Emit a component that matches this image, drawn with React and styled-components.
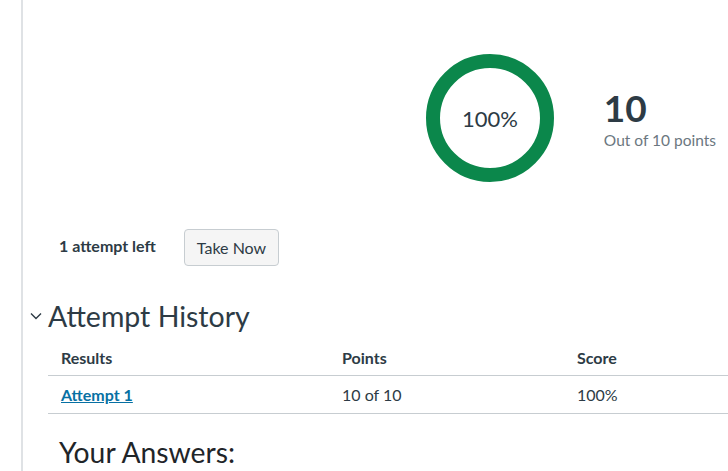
import React from "react";
import styled, { createGlobalStyle } from "styled-components";

const Global = createGlobalStyle`
  html, body { margin: 0; padding: 0; background: #fff; }
  body { font-family: Lato, "Open Sans", sans-serif; color: #2d3b45; overflow: hidden; }
`;

const Page = styled.div`
  width: 728px;
  height: 471px;
  overflow: hidden;
  display: flex;
`;

const Gutter = styled.div`
  width: 21px;
  flex: none;
  border-right: 2px solid #dfe2e5;
`;

const Main = styled.main`
  flex: 1;
  min-width: 0;
  display: flex;
  flex-direction: column;
`;

const ScoreRow = styled.section`
  display: flex;
  align-items: center;
  justify-content: flex-end;
  gap: 50px;
  padding: 54px 12px 0 0;
`;

const Ring = styled.div`
  width: 128px;
  height: 128px;
  box-sizing: border-box;
  border-radius: 50%;
  border: 14px solid #0b874b;
  display: flex;
  align-items: center;
  justify-content: center;
  font-size: 22px;
  color: #2d3b45;
`;

const Points = styled.div`
  display: flex;
  flex-direction: column;
`;

const Big = styled.div`
  font-size: 37px;
  font-weight: 700;
  line-height: 44px;
  color: #2d3b45;
`;

const Sub = styled.div`
  font-size: 15.5px;
  line-height: 20px;
  color: #6b7780;
`;

const AttemptRow = styled.div`
  display: flex;
  align-items: center;
  gap: 28px;
  padding: 47px 0 0 36px;
`;

const Left = styled.span`
  font-size: 16px;
  font-weight: 700;
  color: #2d3b45;
  margin-top: -4px;
`;

const Button = styled.button`
  font-family: Lato, sans-serif;
  font-size: 16px;
  color: #2d3b45;
  background: #f5f5f5;
  border: 1px solid #c7cdd1;
  border-radius: 4px;
  height: 37px;
  padding: 0 12px;
`;

const HistoryHeader = styled.h2`
  display: flex;
  align-items: center;
  margin: 32px 0 0 7px;
  font-weight: 400;
  font-size: 28.5px;
  line-height: 36px;
  color: #2d3b45;
  gap: 6px;
`;

const Table = styled.div`
  margin: 5px 0 0 25px;
  width: 720px;
`;

const Row = styled.div`
  display: grid;
  grid-template-columns: 281px 235px 1fr;
  border-bottom: 1px solid #c7cdd1;
  height: ${(p) => p.$h}px;
  align-items: center;
  font-size: 16px;
  font-weight: ${(p) => (p.$head ? 700 : 400)};
  color: #2d3b45;
`;

const Cell = styled.div`
  padding-left: 13px;
`;

const Link = styled.a`
  color: #0770a3;
  font-weight: 700;
  text-decoration: underline;
`;

const Answers = styled.h3`
  margin: 22px 0 0 36px;
  font-weight: 400;
  font-size: 28.3px;
  line-height: 32px;
  color: #1f2529;
`;

export default function App() {
  return (
    <>
      <Global />
      <Page>
        <Gutter />
        <Main>
          <ScoreRow>
            <Ring>100%</Ring>
            <Points>
              <Big>10</Big>
              <Sub>Out of 10 points</Sub>
            </Points>
          </ScoreRow>
          <AttemptRow>
            <Left>1 attempt left</Left>
            <Button>Take Now</Button>
          </AttemptRow>
          <HistoryHeader>
            <svg width="12" height="8" viewBox="0 0 12 8" fill="none">
              <path d="M1 1.5 L6 6.5 L11 1.5" stroke="#2d3b45" strokeWidth="1.4" />
            </svg>
            Attempt History
          </HistoryHeader>
          <Table>
            <Row $head $h={36}>
              <Cell>Results</Cell>
              <Cell>Points</Cell>
              <Cell>Score</Cell>
            </Row>
            <Row $h={37}>
              <Cell><Link href="#">Attempt 1</Link></Cell>
              <Cell>10 of 10</Cell>
              <Cell>100%</Cell>
            </Row>
          </Table>
          <Answers>Your Answers:</Answers>
        </Main>
      </Page>
    </>
  );
}
